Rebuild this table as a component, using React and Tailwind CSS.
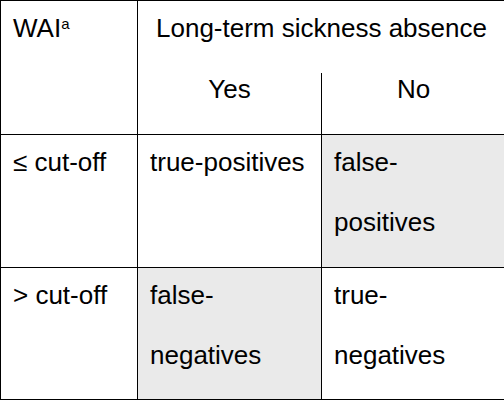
export default function App() {
  const line = "border-black";
  return (
    <div className="w-[504px] h-[402px] overflow-hidden bg-white text-black font-['Liberation_Sans',Arial,sans-serif] text-[26px]">
      <div className="grid grid-cols-[137px_184px_183px] grid-rows-[72px_62px_133px_132px] border-l border-t border-black">
        <div className={`row-span-2 border-r border-b ${line} pl-3 leading-[54px]`}>
          WAI<span className="text-[15px] leading-none align-[8px]">a</span>
        </div>
        <div className="col-span-2 text-center leading-[54px]">Long-term sickness absence</div>
        <div className={`border-r border-b ${line} text-center leading-[33px]`}>Yes</div>
        <div className={`border-b ${line} text-center leading-[33px]`}>No</div>

        <div className={`border-r border-b ${line} pl-3 leading-[54px]`}>≤ cut-off</div>
        <div className={`border-r border-b ${line} pl-3 leading-[54px]`}>true-positives</div>
        <div className={`border-b ${line} bg-[#eaeaea] pl-3 leading-[54px] flex flex-col gap-[6px]`}>
          <div>false-</div>
          <div>positives</div>
        </div>

        <div className={`border-r border-b ${line} pl-3 leading-[54px]`}>&gt; cut-off</div>
        <div className={`border-r border-b ${line} bg-[#eaeaea] pl-3 leading-[54px] flex flex-col gap-[6px]`}>
          <div>false-</div>
          <div>negatives</div>
        </div>
        <div className={`border-b ${line} pl-3 leading-[54px] flex flex-col gap-[6px]`}>
          <div>true-</div>
          <div>negatives</div>
        </div>
      </div>
    </div>
  );
}
